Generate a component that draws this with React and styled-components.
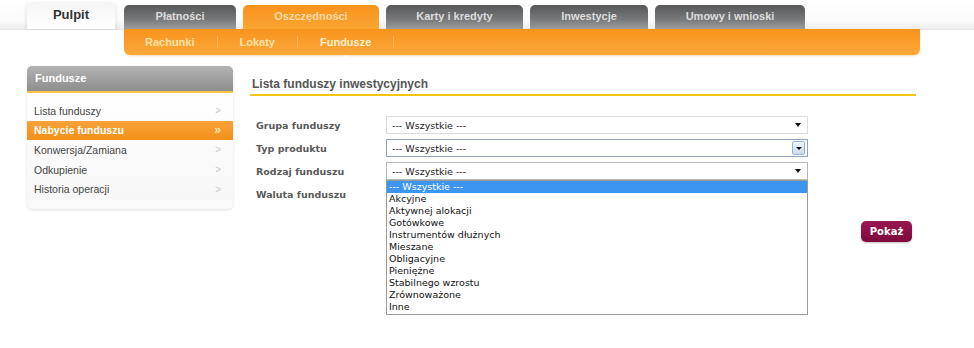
import React from "react";
import styled, { createGlobalStyle } from "styled-components";

const GlobalStyle = createGlobalStyle`
  body {
    margin: 0;
    background: #fff;
    font-family: "Liberation Sans", Arial, sans-serif;
  }
`;

const tabs = [
  { label: "Płatności", width: 112 },
  { label: "Oszczędności", width: 136, active: true },
  { label: "Karty i kredyty", width: 137 },
  { label: "Inwestycje", width: 118 },
  { label: "Umowy i wnioski", width: 150 },
];

const subItems = [
  { label: "Rachunki" },
  { label: "Lokaty" },
  { label: "Fundusze", current: true },
];

const menu = [
  { label: "Lista funduszy" },
  { label: "Nabycie funduszu", active: true },
  { label: "Konwersja/Zamiana" },
  { label: "Odkupienie" },
  { label: "Historia operacji" },
];

const options = [
  "--- Wszystkie ---",
  "Akcyjne",
  "Aktywnej alokacji",
  "Gotówkowe",
  "Instrumentów dłużnych",
  "Mieszane",
  "Obligacyjne",
  "Pieniężne",
  "Stabilnego wzrostu",
  "Zrównoważone",
  "Inne",
];

const App = () => {
  return (
    <Page>
      <GlobalStyle />
      <TopBar>
        <HomeTab>Pulpit</HomeTab>
        {tabs.map((t) => (
          <Tab key={t.label} $w={t.width} $active={t.active}>
            {t.label}
          </Tab>
        ))}
      </TopBar>
      <SubBar>
        {subItems.map((s) => (
          <SubItem key={s.label} $current={s.current}>
            {s.label}
            {s.current && <Pointer />}
          </SubItem>
        ))}
        <SubItem />
      </SubBar>

      <Content>
        <Sidebar>
          <SideHead>Fundusze</SideHead>
          <SideList>
            {menu.map((m) => (
              <SideItem key={m.label} $active={m.active}>
                <span>{m.label}</span>
                <Chevron $active={m.active}>{m.active ? "»" : ">"}</Chevron>
              </SideItem>
            ))}
          </SideList>
        </Sidebar>

        <Main>
          <Heading>Lista funduszy inwestycyjnych</Heading>
          <Form>
            <Row>
              <Label>Grupa funduszy</Label>
              <Select>
                <span>--- Wszystkie ---</span>
                <Arrow />
              </Select>
            </Row>
            <Row>
              <Label>Typ produktu</Label>
              <Select $focused>
                <span>--- Wszystkie ---</span>
                <DropButton>
                  <Arrow $small />
                </DropButton>
              </Select>
            </Row>
            <Row>
              <Label>Rodzaj funduszu</Label>
              <SelectWrap>
                <Select $open>
                  <span>--- Wszystkie ---</span>
                  <Arrow />
                </Select>
                <ListBox>
                  {options.map((o, i) => (
                    <Option key={o} $selected={i === 0}>
                      {o}
                    </Option>
                  ))}
                </ListBox>
              </SelectWrap>
            </Row>
            <Row>
              <Label>Waluta funduszu</Label>
              {/* covered by the open list above */}
              <Select>
                <Arrow />
              </Select>
            </Row>
            <Actions>
              <ShowButton>Pokaż</ShowButton>
            </Actions>
          </Form>
        </Main>
      </Content>
    </Page>
  );
};

export default App;

const Page = styled.div`
  width: 974px;
  height: 348px;
  overflow: hidden;
  background: #fff;
`;

const TopBar = styled.div`
  height: 30px;
  display: flex;
  align-items: flex-end;
  gap: 7px;
  padding-left: 27px;
  background: linear-gradient(#ffffff 0%, #fbfbfb 70%, #ececec 100%);
  border-bottom: 1px solid #e6e6e6;
  box-sizing: border-box;
`;

const HomeTab = styled.div`
  width: 88px;
  height: 26px;
  margin-right: 2px;
  background: linear-gradient(#f6f6f6, #ffffff);
  border-radius: 5px 5px 0 0;
  box-shadow: -2px 0 3px rgba(0, 0, 0, 0.06), 2px 0 3px rgba(0, 0, 0, 0.06);
  color: #333;
  font-weight: bold;
  font-size: 13px;
  text-align: center;
  line-height: 24px;
`;

const Tab = styled.div`
  width: ${(p) => p.$w}px;
  height: 24px;
  border-radius: 5px 5px 0 0;
  background: ${(p) =>
    p.$active
      ? "linear-gradient(#f7921c, #fba533)"
      : "linear-gradient(#555759 0%, #77797b 60%, #9a9c9e 100%)"};
  color: ${(p) => (p.$active ? "#ffdca8" : "#dcdcdc")};
  font-weight: bold;
  font-size: 11px;
  text-align: center;
  line-height: 23px;
`;

const SubBar = styled.div`
  margin-left: 124px;
  width: 796px;
  height: 26px;
  margin-top: -1px;
  display: flex;
  align-items: center;
  background: linear-gradient(#f7941d, #fca83a);
  border-radius: 0 0 6px 6px;
  box-shadow: 0 1px 2px rgba(230, 150, 40, 0.35);
`;

const SubItem = styled.div`
  position: relative;
  padding: 0 22px;
  height: 12px;
  line-height: 12px;
  font-size: 11px;
  font-weight: bold;
  color: ${(p) => (p.$current ? "#fff1cf" : "#ffe2a8")};
  border-left: 1px solid #fbb862;
  &:first-child {
    border-left: none;
    padding-left: 21px;
  }
`;

const Pointer = styled.span`
  position: absolute;
  left: 50%;
  bottom: -12px;
  margin-left: -5px;
  width: 0;
  height: 0;
  border-left: 5px solid transparent;
  border-right: 5px solid transparent;
  border-bottom: 5px solid #fff;
`;

const Content = styled.div`
  display: flex;
  align-items: flex-start;
  padding-left: 27px;
  margin-top: 11px;
`;

const Sidebar = styled.div`
  width: 206px;
  border-radius: 5px;
  background: #f9f9f9;
  box-shadow: 0 1px 3px rgba(0, 0, 0, 0.12);
  padding-bottom: 10px;
`;

const SideHead = styled.div`
  height: 25px;
  line-height: 25px;
  padding-left: 8px;
  border-radius: 5px 5px 0 0;
  background: linear-gradient(#b3b3b3, #8e8e8e);
  border-bottom: 2px solid #f7c34a;
  color: #fff;
  font-weight: bold;
  font-size: 11px;
`;

const SideList = styled.div`
  padding-top: 8px;
  background: linear-gradient(#ffffff, #f7f7f7);
`;

const SideItem = styled.div`
  height: 19.6px;
  display: flex;
  align-items: center;
  justify-content: space-between;
  padding: 0 12px 0 7px;
  font-size: 10.5px;
  color: ${(p) => (p.$active ? "#fff" : "#444")};
  font-weight: ${(p) => (p.$active ? "bold" : "normal")};
  background: ${(p) => (p.$active ? "linear-gradient(#f8a23a, #f39019)" : "transparent")};
`;

const Chevron = styled.span`
  color: ${(p) => (p.$active ? "#ffe0b0" : "#c8c8c8")};
  font-size: ${(p) => (p.$active ? "12px" : "10px")};
`;

const Main = styled.div`
  margin-left: 17px;
  width: 666px;
`;

const Heading = styled.div`
  padding: 11px 0 0 2px;
  height: 17px;
  font-size: 12px;
  font-weight: bold;
  color: #555;
  border-bottom: 2px solid #f6c514;
`;

const Form = styled.div`
  padding: 20px 0 0 6px;
  display: flex;
  flex-direction: column;
  gap: 5px;
`;

const Row = styled.div`
  display: flex;
  align-items: center;
  height: 18px;
`;

const Label = styled.div`
  width: 130px;
  font-family: "DejaVu Sans", Verdana, sans-serif;
  font-size: 9.5px;
  font-weight: bold;
  color: #595959;
`;

const SelectWrap = styled.div`
  position: relative;
  z-index: 2;
`;

const Select = styled.div`
  position: relative;
  width: 422px;
  height: 18px;
  box-sizing: border-box;
  display: flex;
  align-items: center;
  justify-content: space-between;
  padding: 0 2px 0 5px;
  background: #fff;
  border: 1px solid ${(p) => (p.$focused ? "#8fa5bd" : p.$open ? "#b8b8b8" : "#dcdcdc")};
  font-family: "DejaVu Sans", Verdana, sans-serif;
  font-size: 9.5px;
  color: #222;
  & > :only-child {
    margin-left: auto;
  }
`;

const Arrow = styled.span`
  width: 0;
  height: 0;
  margin-right: ${(p) => (p.$small ? "0" : "4px")};
  border-left: ${(p) => (p.$small ? 3 : 3.5)}px solid transparent;
  border-right: ${(p) => (p.$small ? 3 : 3.5)}px solid transparent;
  border-top: ${(p) => (p.$small ? 3 : 4)}px solid #111;
`;

const DropButton = styled.span`
  width: 13px;
  height: 14px;
  display: flex;
  align-items: center;
  justify-content: center;
  border: 1px solid #9bb2c9;
  border-radius: 2px;
  background: linear-gradient(#eef5fb, #c9dcee);
  box-sizing: border-box;
`;

const ListBox = styled.div`
  position: absolute;
  top: 18px;
  left: 0;
  width: 422px;
  box-sizing: border-box;
  background: #fff;
  border: 1px solid #9a9a9a;
  font-family: "DejaVu Sans", Verdana, sans-serif;
  font-size: 9.5px;
  padding-bottom: 1px;
`;

const Option = styled.div`
  height: 12px;
  line-height: 12px;
  padding-left: 2px;
  color: ${(p) => (p.$selected ? "#fff" : "#111")};
  background: ${(p) => (p.$selected ? "#3c96f0" : "transparent")};
`;

const Actions = styled.div`
  display: flex;
  justify-content: flex-end;
  margin-top: 13px;
  padding-right: 4px;
`;

const ShowButton = styled.button`
  width: 51px;
  height: 21px;
  border: none;
  border-radius: 5px;
  background: linear-gradient(#9a1650, #7c0b3a);
  box-shadow: 0 1px 2px rgba(0, 0, 0, 0.25);
  color: #fff;
  font-family: "DejaVu Sans", Verdana, sans-serif;
  font-weight: bold;
  font-size: 10px;
  padding: 0;
`;
